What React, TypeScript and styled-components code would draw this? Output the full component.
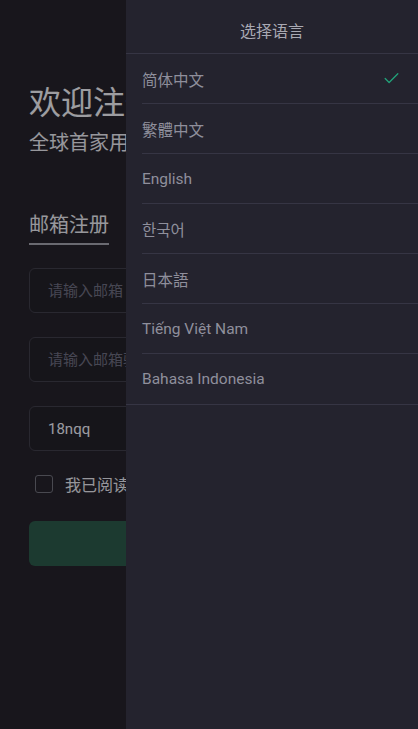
import React, { useState } from 'react';
import styled, { createGlobalStyle } from 'styled-components';
import { Check } from 'lucide-react';

const GlobalStyle = createGlobalStyle`
    html, body {
        margin: 0;
        padding: 0;
        background: #25232b;
    }
    * {
        box-sizing: border-box;
    }
    body {
        font-family: Roboto, "Noto Sans CJK SC", "Noto Sans", sans-serif;
    }
`;

const StyledPage = styled.div`
    display: flex;
    flex-direction: column;
    min-height: 729px;
    padding: 83px 29px 0;
    background: #25232b;
    overflow: hidden;
`;

const StyledTitle = styled.h1`
    margin: 0;
    font-size: 32px;
    line-height: 40px;
    font-weight: 400;
    color: #f2f2f8;
    white-space: nowrap;
`;

const StyledSubtitle = styled.div`
    margin-top: 6px;
    font-size: 20px;
    line-height: 28px;
    color: #e8e8f0;
    white-space: nowrap;
`;

const StyledTab = styled.div`
    align-self: flex-start;
    margin-top: 54px;
    padding-bottom: 4px;
    font-size: 20px;
    line-height: 28px;
    color: #e8e8f0;
    border-bottom: 2px solid #a4a4ae;
`;

const StyledForm = styled.form`
    display: flex;
    flex-direction: column;
    margin-top: 23px;
`;

const StyledInput = styled.input<{ $gap?: number }>`
    height: 45px;
    margin-top: ${(p) => p.$gap ?? 0}px;
    padding: 0 18px;
    font-family: inherit;
    font-size: 15px;
    color: #eeeef8;
    background: #222128;
    border: 1px solid #403e4b;
    border-radius: 6px;
    outline: none;

    &::placeholder {
        color: #6e6d80;
    }
`;

const StyledAgree = styled.label`
    display: flex;
    align-items: center;
    gap: 12px;
    height: 20px;
    margin-top: 23px;
    padding-left: 6px;
    font-size: 16px;
    color: #e6e6ee;
    white-space: nowrap;
`;

const StyledBox = styled.span`
    width: 18px;
    height: 18px;
    border: 1.5px solid #70707c;
    border-radius: 3px;
`;

const StyledSubmit = styled.button`
    height: 45px;
    margin-top: 27px;
    font-family: inherit;
    font-size: 16px;
    color: #2b5a4a;
    background: #2b5a4a;
    border: none;
    border-radius: 6px;
`;

const StyledMask = styled.div`
    position: fixed;
    inset: 0;
    background: rgba(0, 0, 0, 0.35);
`;

const StyledDrawer = styled.aside`
    position: fixed;
    top: 0;
    right: 0;
    bottom: 0;
    width: 292px;
    display: flex;
    flex-direction: column;
    background: #24232e;
`;

const StyledDrawerHeader = styled.div`
    height: 54px;
    display: flex;
    align-items: center;
    justify-content: center;
    padding-top: 6px;
    font-size: 16px;
    color: #a9a9b3;
    border-bottom: 1px solid #363544;
`;

const StyledList = styled.ul`
    margin: 0;
    padding: 0;
    list-style: none;
    border-bottom: 1px solid #363544;
`;

const StyledItem = styled.li`
    padding-left: 16px;
    cursor: pointer;

    &:last-child > div {
        border-bottom: none;
    }
`;

const StyledItemInner = styled.div`
    height: 50px;
    display: flex;
    align-items: center;
    justify-content: space-between;
    padding-right: 17px;
    font-size: 15.5px;
    color: #8f8f9c;
    border-bottom: 1px solid #363544;
`;

const languages = ['简体中文', '繁體中文', 'English', '한국어', '日本語', 'Tiếng Việt Nam', 'Bahasa Indonesia'];

const App = (): JSX.Element => {
    const [lang, setLang] = useState<string>('简体中文');

    return (
        <>
            <GlobalStyle />
            <StyledPage>
                <StyledTitle>欢迎注册</StyledTitle>
                <StyledSubtitle>全球首家用户驱动型交易所</StyledSubtitle>
                <StyledTab>邮箱注册</StyledTab>
                <StyledForm onSubmit={(ev) => ev.preventDefault()}>
                    <StyledInput type="email" placeholder="请输入邮箱" />
                    <StyledInput $gap={24} type="text" placeholder="请输入邮箱验证码" />
                    <StyledInput $gap={24} type="text" defaultValue="18nqq" />
                    <StyledAgree>
                        <StyledBox />
                        我已阅读并同意《用户协议》
                    </StyledAgree>
                    <StyledSubmit type="submit">注册</StyledSubmit>
                </StyledForm>
            </StyledPage>
            <StyledMask />
            <StyledDrawer>
                <StyledDrawerHeader>选择语言</StyledDrawerHeader>
                <StyledList>
                    {languages.map((item) => (
                        <StyledItem key={item} onClick={() => setLang(item)}>
                            <StyledItemInner>
                                {item}
                                {lang === item && <Check size={19} color="#22a37a" strokeWidth={1.6} />}
                            </StyledItemInner>
                        </StyledItem>
                    ))}
                </StyledList>
            </StyledDrawer>
        </>
    );
};

export default App;
